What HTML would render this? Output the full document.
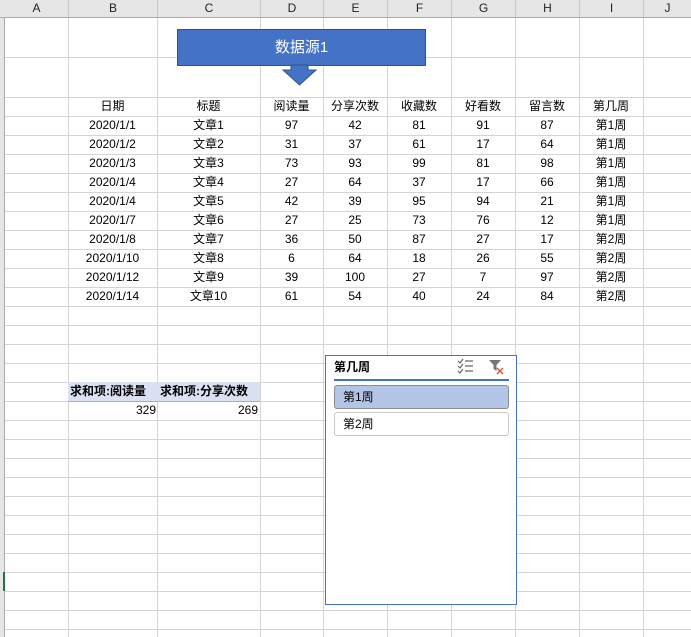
<!DOCTYPE html>
<html><head><meta charset="utf-8"><style>
*{margin:0;padding:0;box-sizing:border-box}
body{width:691px;height:637px;overflow:hidden;position:relative;background:#fff;font-family:"Liberation Sans","Noto Sans CJK SC",sans-serif;font-size:12px;color:#000}
.grid{position:absolute;left:0;top:97px;width:691px;height:540px;background:repeating-linear-gradient(to bottom,#d4d4d4 0,#d4d4d4 1px,transparent 1px,transparent 19px)}
.h{position:absolute;left:0;width:691px;height:1px;background:#d4d4d4}
.v{position:absolute;top:0;width:1px;height:637px;background:#d4d4d4}
.hdr{position:absolute;left:0;top:0;width:691px;height:18px;background:#e6e6e6;border-bottom:1px solid #ababab}
.hdr div{position:absolute;top:0;height:17px;line-height:17px;text-align:center;font-size:12px;color:#222;border-right:1px solid #c8c8c8}
.rh{position:absolute;left:0;top:18px;width:5px;height:619px;background:#e6e6e6;border-right:1px solid #ababab}
table{position:absolute;left:68px;top:97px;border-collapse:collapse}
td{height:19px;padding:0;text-align:center;line-height:19px;white-space:nowrap}
</style></head><body>
<div class="grid"></div>
<div class="h" style="top:57px"></div>
<div class="v" style="left:68px"></div><div class="v" style="left:157px"></div><div class="v" style="left:260px"></div><div class="v" style="left:323px"></div><div class="v" style="left:387px"></div><div class="v" style="left:451px"></div><div class="v" style="left:515px"></div><div class="v" style="left:579px"></div><div class="v" style="left:643px"></div>
<div class="hdr">
<div style="left:5px;width:64px">A</div><div style="left:69px;width:89px">B</div><div style="left:158px;width:103px">C</div><div style="left:261px;width:63px">D</div><div style="left:324px;width:64px">E</div><div style="left:388px;width:64px">F</div><div style="left:452px;width:64px">G</div><div style="left:516px;width:64px">H</div><div style="left:580px;width:64px">I</div><div style="left:644px;width:47px;border:none">J</div>
</div>
<div class="rh"></div>
<div style="position:absolute;left:3px;top:572px;width:2px;height:19px;background:#217346"></div>

<table>
<colgroup><col style="width:89px"><col style="width:103px"><col style="width:63px"><col style="width:64px"><col style="width:64px"><col style="width:64px"><col style="width:64px"><col style="width:64px"></colgroup>
<tr><td>日期</td><td>标题</td><td>阅读量</td><td>分享次数</td><td>收藏数</td><td>好看数</td><td>留言数</td><td>第几周</td></tr>
<tr><td>2020/1/1</td><td>文章1</td><td>97</td><td>42</td><td>81</td><td>91</td><td>87</td><td>第1周</td></tr>
<tr><td>2020/1/2</td><td>文章2</td><td>31</td><td>37</td><td>61</td><td>17</td><td>64</td><td>第1周</td></tr>
<tr><td>2020/1/3</td><td>文章3</td><td>73</td><td>93</td><td>99</td><td>81</td><td>98</td><td>第1周</td></tr>
<tr><td>2020/1/4</td><td>文章4</td><td>27</td><td>64</td><td>37</td><td>17</td><td>66</td><td>第1周</td></tr>
<tr><td>2020/1/4</td><td>文章5</td><td>42</td><td>39</td><td>95</td><td>94</td><td>21</td><td>第1周</td></tr>
<tr><td>2020/1/7</td><td>文章6</td><td>27</td><td>25</td><td>73</td><td>76</td><td>12</td><td>第1周</td></tr>
<tr><td>2020/1/8</td><td>文章7</td><td>36</td><td>50</td><td>87</td><td>27</td><td>17</td><td>第2周</td></tr>
<tr><td>2020/1/10</td><td>文章8</td><td>6</td><td>64</td><td>18</td><td>26</td><td>55</td><td>第2周</td></tr>
<tr><td>2020/1/12</td><td>文章9</td><td>39</td><td>100</td><td>27</td><td>7</td><td>97</td><td>第2周</td></tr>
<tr><td>2020/1/14</td><td>文章10</td><td>61</td><td>54</td><td>40</td><td>24</td><td>84</td><td>第2周</td></tr>
</table>

<!-- pivot -->
<div style="position:absolute;left:68px;top:382px;width:192px;height:20px;background:#d9e1f2;border-bottom:1px solid #9bb0d8"></div>
<div style="position:absolute;left:70px;top:382px;line-height:19px;font-weight:bold">求和项:阅读量</div>
<div style="position:absolute;left:160px;top:382px;line-height:19px;font-weight:bold">求和项:分享次数</div>
<div style="position:absolute;left:68px;top:401px;width:88px;line-height:19px;text-align:right">329</div>
<div style="position:absolute;left:157px;top:401px;width:101px;line-height:19px;text-align:right">269</div>

<!-- shape -->
<div style="position:absolute;left:177px;top:29px;width:249px;height:37px;background:#4472c4;border:1px solid #2f528f;color:#fff;font-size:15px;text-align:center;line-height:35px">数据源1</div>
<svg style="position:absolute;left:280px;top:64px" width="40" height="24"><path d="M11 1H28V6H36L19.5 21L3 6H11Z" fill="#4472c4" stroke="#2f528f" stroke-width="1"/></svg>

<!-- slicer -->
<div style="position:absolute;left:325px;top:355px;width:192px;height:250px;background:#fff;border:1px solid #4472c4"></div>
<div style="position:absolute;left:334px;top:359px;font-weight:bold;font-size:12px;line-height:17px">第几周</div>
<svg style="position:absolute;left:456px;top:358px" width="20" height="17"><g stroke="#666" fill="none" stroke-width="1.2"><path d="M2 3l2 2 3-4M2 8l2 2 3-4M2 13l2 2 3-4"/><path d="M9 3h8M9 8h8M9 13h8"/></g></svg>
<svg style="position:absolute;left:488px;top:358px" width="20" height="18"><path d="M1 2h12l-4.5 5v6l-3-2V7Z" fill="#777"/><path d="M9 10l6 6M15 10l-6 6" stroke="#e0573a" stroke-width="1.5"/></svg>
<div style="position:absolute;left:334px;top:379px;width:175px;height:2px;background:#4472c4"></div>
<div style="position:absolute;left:334px;top:385px;width:175px;height:24px;background:#b4c6e7;border:1px solid #8c8c8c;border-radius:3px;line-height:22px;padding-left:8px">第1周</div>
<div style="position:absolute;left:334px;top:412px;width:175px;height:24px;background:#fff;border:1px solid #c8c8c8;border-radius:3px;line-height:22px;padding-left:8px">第2周</div>
</body></html>
